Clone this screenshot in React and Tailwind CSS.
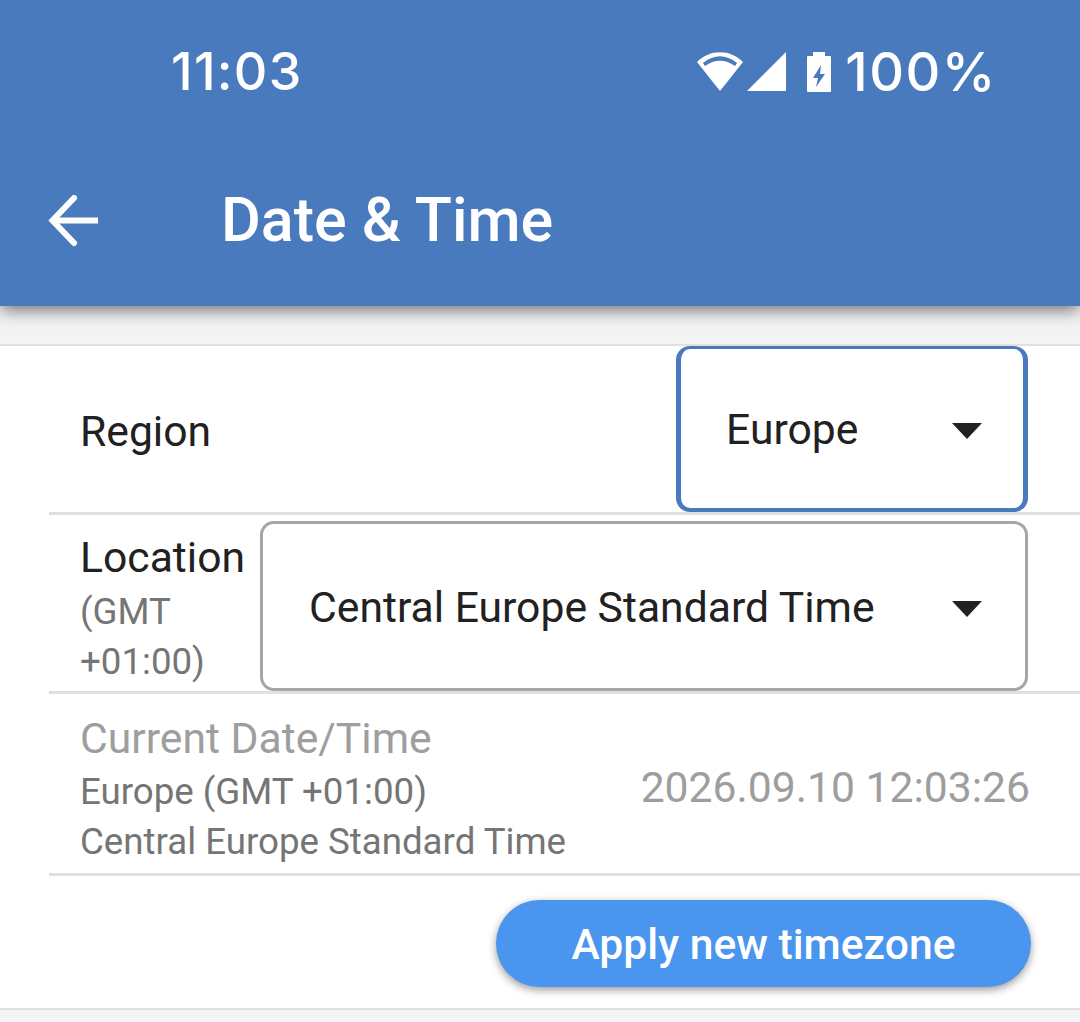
const StatusIcons = () => (
  <div className="flex items-center">
    {/* wifi */}
    <svg width="46" height="40" viewBox="0 0 46 40" className="mr-[4px]">
      <path fillRule="evenodd" fill="#fff" d="M0 10 C13 -3 33 -3 46 10 L23 39 Z M6 11 C17 2 29 2 40 11 L38 14 C28 7 18 7 8 14 Z" />
    </svg>
    {/* cell signal */}
    <svg width="40" height="40" viewBox="0 0 40 40" className="mr-[20px]">
      <path fill="#fff" d="M0 39 L39 0 V39 Z" />
    </svg>
    {/* battery charging */}
    <svg width="24" height="40" viewBox="0 0 24 40" className="mr-[14px]">
      <path fill="#fff" fillRule="evenodd" d="M6 0 H18 V4 H23 Q24 4 24 5 V39 Q24 40 23 40 H1 Q0 40 0 39 V5 Q0 4 1 4 H6 Z M14 13 L6 26 H11 L9 35 L18 22 H13 Z" />
    </svg>
  </div>
);

const Caret = () => (
  <svg width="30" height="16" viewBox="0 0 30 16" className="shrink-0 mt-[5px]">
    <path fill="#212121" d="M0 0 H30 L15 16 Z" />
  </svg>
);

const App = () => {
  return (
    <div className="w-[1080px] h-[1022px] overflow-hidden bg-[#f4f4f4] font-['Roboto',sans-serif]">
      <header className="h-[306px] bg-[#4a7abe] text-white shadow-[0_4px_16px_rgba(0,0,0,0.55)] relative">
        <div className="h-[143px] flex items-center justify-between pl-[171px] pr-[83px] font-['Inter',sans-serif]">
          <span className="text-[52px] font-medium leading-none tracking-[1.3px]">11:03</span>
          <div className="flex items-center">
            <StatusIcons />
            <span className="text-[54px] font-medium leading-none tracking-[1.5px]">100%</span>
          </div>
        </div>
        <div className="flex items-center h-[155px] pl-[48px]">
          <svg width="52" height="52" viewBox="0 0 52 52" fill="none" stroke="#fff" strokeWidth="6">
            <path d="M50 25.5 H6" />
            <path d="M26 3 L4.5 25.5 L26 48" strokeLinecap="round" />
          </svg>
          <h1 className="ml-[121px] text-[61px] font-medium leading-none">Date &amp; Time</h1>
        </div>
      </header>

      <div className="mt-[38px] h-[666px] bg-white border-y-2 border-[#e0e0e0]">
        <div className="ml-[49px]">
          <div className="h-[169px] border-b-[3px] border-[#e0e0e0] flex justify-between pl-[31px] pr-[52px]">
            <span className="self-center pt-[5px] text-[42.67px] leading-none text-[#212121]">Region</span>
            <div className="w-[352px] h-[166px] rounded-[14px] border-x-[5px] border-t-[3px] border-b-[4px] border-[#4a7abe] bg-white flex items-center justify-between pl-[45px] pr-[41px]">
              <span className="pt-[2px] text-[42.67px] leading-none text-[#212121]">Europe</span>
              <Caret />
            </div>
          </div>

          <div className="h-[179px] border-b-[3px] border-[#e0e0e0] flex items-end justify-between pl-[31px] pr-[52px]">
            <div className="pb-[4px]">
              <div className="mb-[5px] text-[42.67px] leading-[50px] text-[#212121]">Location</div>
              <div className="text-[36.67px] leading-[50px] text-[#757575] w-[150px]">(GMT +01:00)</div>
            </div>
            <div className="w-[768px] h-[170px] rounded-[14px] border-[3px] border-[#a6a6a6] bg-white flex items-center justify-between pl-[46px] pr-[43px]">
              <span className="pt-[2px] text-[42.67px] leading-none text-[#212121]">Central Europe Standard Time</span>
              <Caret />
            </div>
          </div>

          <div className="h-[182px] border-b-[3px] border-[#e0e0e0] flex items-center justify-between pl-[31px] pr-[50px]">
            <div className="pt-[11px]">
              <div className="mb-[3px] text-[42.67px] leading-[50px] text-[#9e9e9e]">Current Date/Time</div>
              <div className="text-[36.67px] leading-[52px] text-[#757575]">Europe (GMT +01:00)</div>
              <div className="text-[36.67px] leading-[48px] text-[#757575]">Central Europe Standard Time</div>
            </div>
            <span className="pt-[8px] text-[42.67px] leading-none text-[#9e9e9e]">2026.09.10 12:03:26</span>
          </div>
        </div>

        <div className="flex justify-end pt-[24px] pr-[49px]">
          <button className="w-[535px] h-[87px] pt-[2px] rounded-full bg-[#4a95ed] text-white text-[42.67px] font-medium leading-none shadow-[0_3px_8px_rgba(0,0,0,0.4)]">
            Apply new timezone
          </button>
        </div>
      </div>
    </div>
  );
};

export default App;
